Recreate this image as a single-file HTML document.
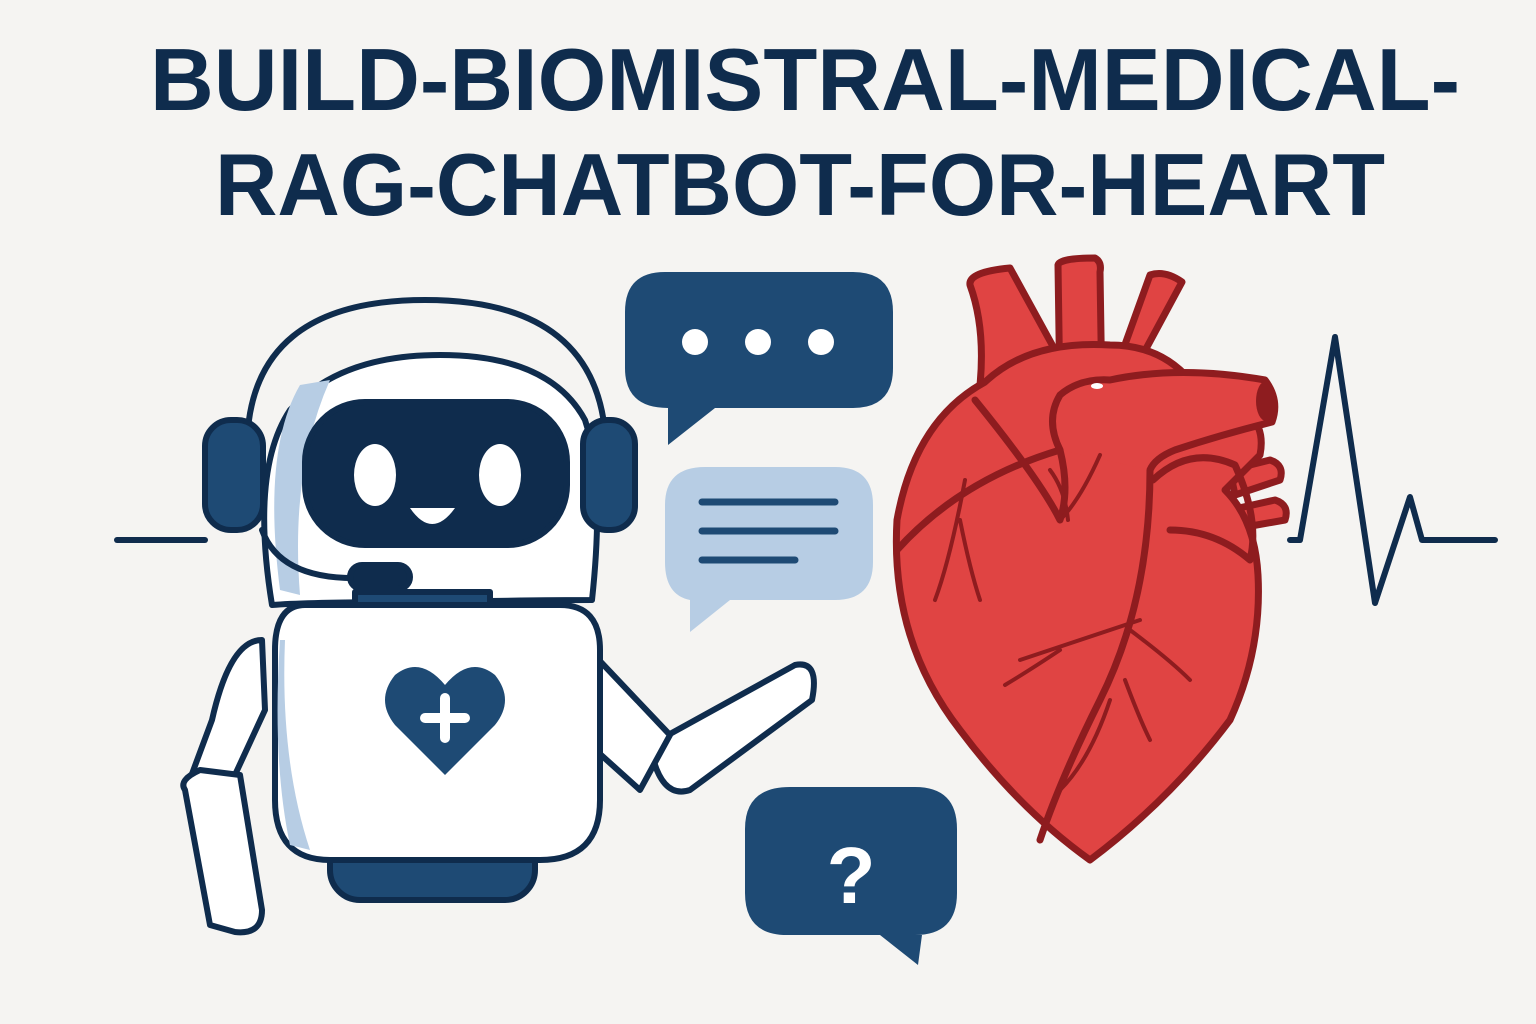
<!DOCTYPE html>
<html><head><meta charset="utf-8"><style>
html,body{margin:0;padding:0;background:#f5f4f2;}
svg{display:block}
</style></head><body>
<svg width="1536" height="1024" viewBox="0 0 1536 1024" xmlns="http://www.w3.org/2000/svg">
<rect width="1536" height="1024" fill="#f5f4f2"/>
<g font-family="Liberation Sans, sans-serif" font-weight="bold" fill="#0f2c4d" font-size="88">
<text x="150" y="110" textLength="1310" lengthAdjust="spacingAndGlyphs">BUILD-BIOMISTRAL-MEDICAL-</text>
<text x="215" y="215" textLength="1170" lengthAdjust="spacingAndGlyphs">RAG-CHATBOT-FOR-HEART</text>
</g>
<!-- ECG -->
<g stroke="#0f2c4d" stroke-width="6" fill="none" stroke-linecap="round" stroke-linejoin="round">
<line x1="117" y1="540" x2="205" y2="540"/>
<polyline points="1290,540 1300,540 1335,337 1375,603 1410,497 1422,540 1495,540"/>
</g>
<!-- bubbles -->
<path d="M665,272 H853 Q893,272 893,312 V368 Q893,408 853,408 H715 L668,445 L668,408 Q625,408 625,368 V312 Q625,272 665,272Z" fill="#1e4a74"/>
<circle cx="695" cy="342" r="13" fill="#fff"/><circle cx="758" cy="342" r="13" fill="#fff"/><circle cx="821" cy="342" r="13" fill="#fff"/>
<path d="M705,467 H835 Q873,467 873,505 V562 Q873,600 835,600 H730 L690,632 L690,600 Q665,595 665,562 V505 Q665,467 705,467Z" fill="#b7cde4"/>
<g stroke="#1e4a74" stroke-width="7" stroke-linecap="round"><line x1="702" y1="502" x2="835" y2="502"/><line x1="702" y1="531" x2="835" y2="531"/><line x1="702" y1="560" x2="795" y2="560"/></g>
<path d="M790,787 H915 Q957,787 957,829 V893 Q957,935 915,935 H922 L918,965 L880,935 H787 Q745,935 745,893 V829 Q745,787 790,787Z" fill="#1e4a74"/>
<text x="851" y="903" text-anchor="middle" font-family="Liberation Sans, sans-serif" font-weight="bold" font-size="80" fill="#fff">?</text>
<!-- robot -->
<g stroke="#0f2c4d" stroke-width="6" stroke-linejoin="round" stroke-linecap="round">
<path d="M247,445 Q250,300 425,300 Q600,300 606,445" fill="none"/>
<path d="M272,605 Q250,470 290,410 Q340,355 440,355 Q550,355 585,420 Q605,480 592,600 Q540,600 425,602 Q310,602 272,605Z" fill="#fff"/>
<path d="M300,385 Q262,450 280,590 L300,595 Q290,470 330,380Z" fill="#b7cde4" stroke="none"/>
<rect x="305" y="402" width="262" height="143" rx="60" fill="#0f2c4d"/>
<rect x="205" y="420" width="58" height="110" rx="26" fill="#1e4a74"/>
<rect x="583" y="420" width="52" height="110" rx="24" fill="#1e4a74"/>
<path d="M262,530 Q280,580 360,578" fill="none"/>
<rect x="350" y="565" width="60" height="24" rx="12" fill="#0f2c4d"/>
<rect x="355" y="592" width="135" height="20" fill="#1e4a74"/>
<rect x="330" y="820" width="205" height="80" rx="30" fill="#1e4a74"/>
<path d="M650,745 L795,665 Q820,660 812,700 L690,790 Q660,800 650,745Z" fill="#fff"/>
<path d="M580,640 L670,735 L640,790 L590,745Z" fill="#fff"/>
<path d="M262,640 Q230,640 212,720 L186,790 Q185,810 228,790 L265,710Z" fill="#fff"/>
<path d="M185,790 Q178,780 200,770 L240,775 L262,910 Q262,935 235,932 L210,925Z" fill="#fff"/>
<path d="M305,605 H560 Q600,605 600,650 V800 Q600,860 540,860 H330 Q275,860 275,800 V650 Q275,605 305,605Z" fill="#fff"/>
</g>
<path d="M285,640 Q280,760 310,850 L290,845 Q272,760 280,640Z" fill="#b7cde4"/>
<ellipse cx="375" cy="475" rx="21" ry="31" fill="#fff"/><ellipse cx="500" cy="475" rx="21" ry="31" fill="#fff"/>
<path d="M410,508 Q432,540 455,508Z" fill="#fff"/>
<path d="M445,775 L395,725 Q375,700 395,675 Q420,655 445,685 Q470,655 495,675 Q515,700 495,725Z" fill="#1e4a74"/>
<g stroke="#fff" stroke-width="10" stroke-linecap="round"><line x1="445" y1="698" x2="445" y2="738"/><line x1="425" y1="718" x2="465" y2="718"/></g>
<!-- heart -->
<g stroke="#8e1c1f" stroke-width="7" stroke-linejoin="round" fill="#e04443">
<path d="M1230,510 L1275,500 Q1290,505 1285,520 L1240,528Z"/>
<path d="M1230,470 L1270,460 Q1285,465 1280,480 L1235,495Z"/>
<!-- vessels -->
<path d="M975,420 Q990,340 970,285 Q968,272 1010,268 L1055,350 L1050,420Z"/>
<path d="M1060,400 L1058,265 Q1060,258 1095,258 Q1102,262 1100,272 L1102,400Z"/>
<path d="M1105,400 L1150,275 Q1165,270 1182,282 L1140,360 L1180,400Z"/>
<!-- body -->
<path d="M985,382 Q915,420 897,520 Q890,640 960,730 Q1020,810 1090,860 Q1170,800 1230,720 Q1262,650 1258,575 Q1255,520 1225,490 L1260,455 Q1265,430 1250,415 L1190,380 Q1160,345 1110,345 Q1030,340 985,382Z"/>
<!-- aorta arch -->
<path d="M1060,450 Q1045,420 1060,395 Q1080,378 1110,380 Q1180,365 1265,380 Q1280,400 1272,422 Q1220,435 1175,450 Q1155,458 1150,470"/>
</g>
<g stroke="#8e1c1f" stroke-width="7" fill="none" stroke-linecap="round" stroke-linejoin="round">
<path d="M1150,470 Q1150,600 1100,700 Q1060,780 1040,840"/>
<path d="M1153,480 Q1190,445 1235,465 Q1260,520 1250,560 Q1215,530 1170,530"/>
<path d="M897,550 Q960,480 1060,450"/>
<path d="M1060,450 Q1070,490 1060,520 Q1040,480 975,400"/>
</g>
<g stroke="#8e1c1f" stroke-width="4" fill="none" stroke-linecap="round">
<path d="M965,480 Q950,560 935,600 M960,520 Q970,570 980,600 M1060,520 Q1080,500 1100,455 M1050,470 Q1065,490 1068,520"/>
<path d="M1140,620 Q1080,640 1020,660 M1060,650 Q1030,670 1005,685 M1130,630 Q1170,660 1190,680 M1110,700 Q1090,760 1060,790 M1125,680 Q1140,720 1150,740"/>
</g>
<ellipse cx="1097" cy="386" rx="6" ry="3" fill="#fff"/>
<ellipse cx="1266" cy="401" rx="10" ry="20" fill="#8e1c1f"/>
</svg>
</body></html>
